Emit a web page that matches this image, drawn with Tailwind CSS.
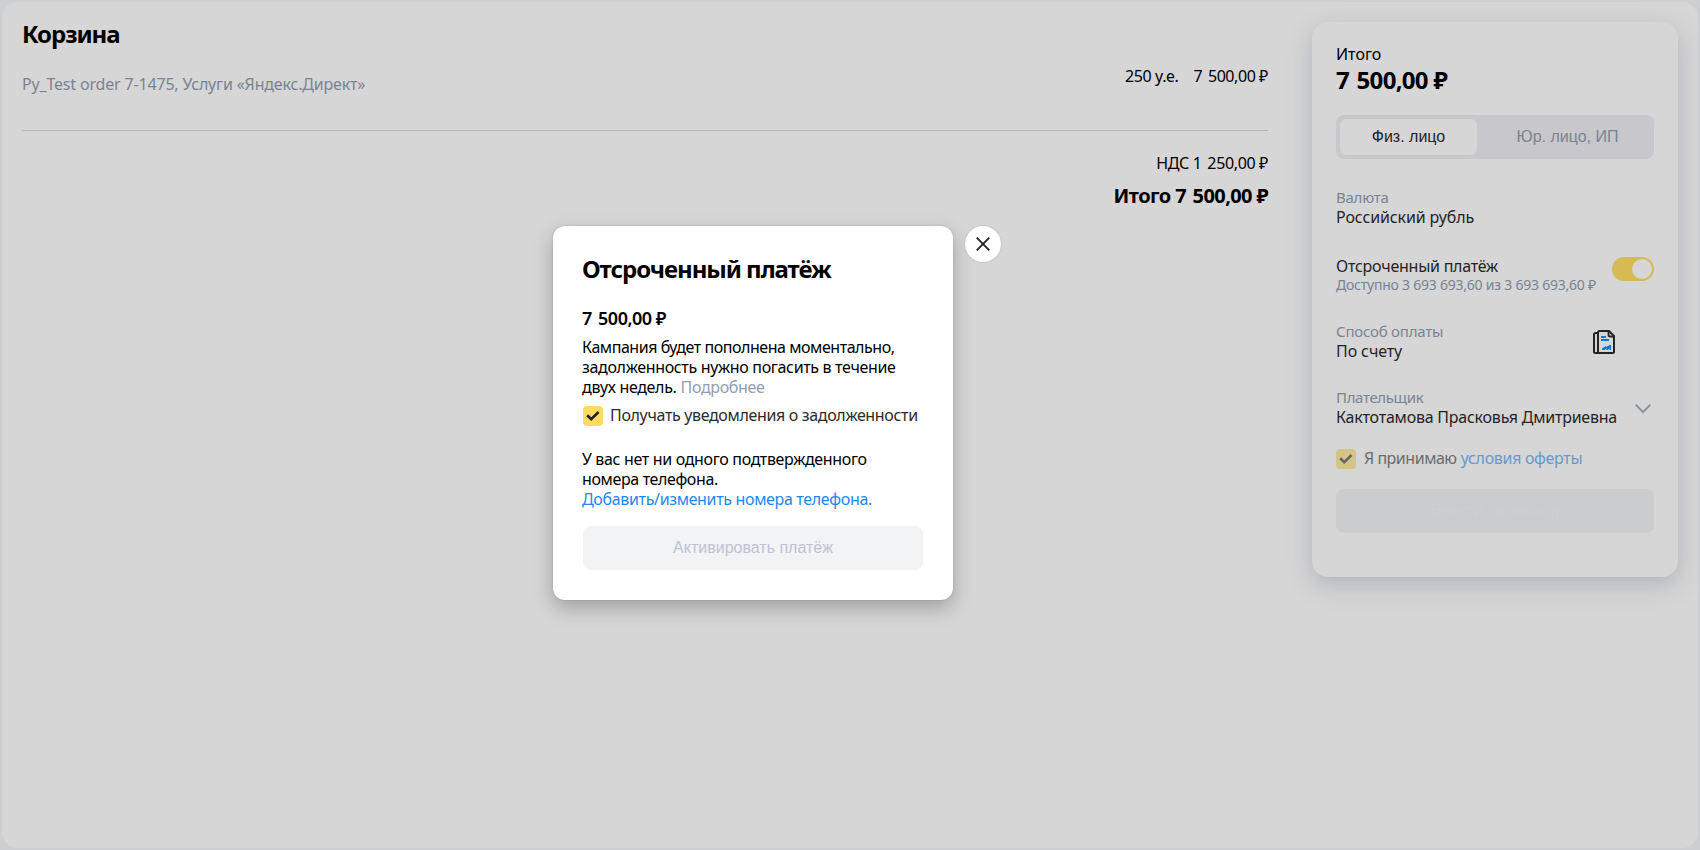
<!DOCTYPE html>
<html lang="ru">
<head>
<meta charset="utf-8">
<title>Корзина</title>
<script src="https://cdn.jsdelivr.net/npm/@tailwindcss/browser@4"></script>
</head>
<body class="relative h-[850px] w-[1700px] overflow-hidden bg-[#f5f7fa] p-0.5 font-['Noto_Sans','Open_Sans',sans-serif] text-base leading-5 text-black">
<main class="flex h-[846px] rounded-[16px] bg-white">
  <section class="ml-5 w-[1246px] whitespace-nowrap">
    <h1 class="mt-[18px] text-2xl leading-7 font-bold tracking-[-1.050px]">Корзина</h1>
    <div class="mt-[18px] flex h-[65px] justify-between border-b border-[#dadce8]">
      <span class="mt-2 tracking-[-0.175px] text-[#939cb0]">Py_Test order 7-1475, Услуги «Яндекс.Директ»</span>
      <div class="flex gap-[15px]"><span class="tracking-[-0.380px]">250 у.е.</span><span class="tracking-[-0.430px]"><span class="mr-0.5">7</span> 500,00 ₽</span></div>
    </div>
    <div class="mt-[22px] flex flex-col items-end">
      <span class="tracking-[-0.360px]">НДС <span class="mr-0.5">1</span> 250,00 ₽</span>
      <span class="mt-[11px] text-xl leading-6 font-bold tracking-[-0.590px]">Итого <span class="mr-0.5">7</span> 500,00 ₽</span>
    </div>
  </section>
  <aside class="mt-5 ml-[44px] h-[555px] w-[366px] rounded-[16px] bg-white px-6 pt-[22px] whitespace-nowrap text-[#2b2b2b] shadow-[0_8px_24px_rgba(110,120,150,0.3)]">
    <div class="text-black">Итого</div>
    <div class="mt-[2px] text-2xl leading-7 font-bold tracking-[-0.700px] text-black"><span class="mr-0.5">7</span> 500,00 ₽</div>
    <div class="mt-[21px] flex h-11 rounded-lg bg-[#edeef3] p-1 font-['Liberation_Sans',sans-serif]">
      <div class="flex w-[137px] items-center justify-center rounded-md bg-white">Физ. лицо</div>
      <div class="flex flex-1 items-center justify-center text-[#939cb0]"><span class="ml-2">Юр. лицо, ИП</span></div>
    </div>
    <div class="mt-7 text-[15px] tracking-[-0.250px] text-[#939cb0]">Валюта</div>
    <div class="tracking-[-0.120px]">Российский рубль</div>
    <div class="mt-[29px] flex justify-between">
      <div>
        <div class="tracking-[-0.240px]">Отсроченный платёж</div>
        <div class="text-sm leading-[18px] tracking-[-0.230px] text-[#939cb0]">Доступно 3 693 693,60 из 3 693 693,60 ₽</div>
      </div>
      <div class="mt-[1px] flex h-6 w-[42px] justify-end rounded-full bg-[#ffdf66] p-0.5"><div class="size-5 rounded-full bg-white"></div></div>
    </div>
    <div class="mt-[27px] flex justify-between">
      <div>
        <div class="text-[15px] tracking-[-0.220px] text-[#939cb0]">Способ оплаты</div>
        <div class="tracking-[-0.100px]">По счету</div>
      </div>
      <svg class="mt-[9px] mr-[39px] h-6 w-[22px]" viewBox="0 0 22 24" fill="none" stroke="#2b2b2b" stroke-width="2" stroke-linejoin="round"><path d="M5 3H2.500Q1 3 1 4.500V21.500Q1 23 2.500 23H19.500Q21 23 21 21.500V6L16 1H6.500Q5 1 5 2.500V23"/><path d="M15.500 1V5Q15.500 6.500 17 6.500H21" stroke-width="1.800"/><path d="M8 7H13M8 10H16" stroke="#1e87f0" stroke-width="2"/><path d="M9 20V18.500L13 16V17L17 15H18V20H16.500V18L15 20H13.500V18.500L11.500 20Z" fill="#1e87f0"  stroke="none"/></svg>
    </div>
    <div class="mt-[26px] flex justify-between">
      <div>
        <div class="text-[15px] tracking-[-0.350px] text-[#939cb0]">Плательщик</div>
        <div class="tracking-[-0.230px]">Кактотамова Прасковья Дмитриевна</div>
      </div>
      <svg class="mt-[17px] mr-[3px] h-[10px] w-4" viewBox="0 0 16 10" fill="none" stroke="#a9b0c2" stroke-width="2"><path d="M.700.800L8 8L15.300.800"/></svg>
    </div>
    <div class="mt-[22px] flex opacity-60">
      <div class="flex size-5 shrink-0 items-center justify-center rounded bg-[#ffdb62]"><svg class="h-[10px] w-[14px]" viewBox="0 0 14 10" fill="none" stroke="#222" stroke-width="2.600"><path d="M1.200 4.300L5.200 8.200L12.600 1"/></svg></div>
      <div class="mt-[-1px] ml-2 tracking-[-0.480px]">Я принимаю</div>
      <div class="mt-[-1px] ml-1 tracking-[-0.320px] text-[#1e87f0]">условия оферты</div>
    </div>
    <div class="mt-5 flex h-11 items-center justify-center rounded-lg bg-[#f2f3f5] font-['Liberation_Sans',sans-serif] text-[#f7f7f8]">Ввести промокод</div>
  </aside>
</main>
<div class="absolute inset-0 bg-black/16"></div>
<div class="absolute top-[226px] left-[553px] h-[374px] w-[400px] rounded-xl bg-white px-[30px] pt-[29px] whitespace-nowrap shadow-[0_8px_20px_rgba(0,0,0,0.25),0_0_2px_rgba(0,0,0,0.2)]">
  <h2 class="-ml-px text-2xl leading-7 font-bold tracking-[-1.050px]">Отсроченный платёж</h2>
  <div class="mt-6 -ml-px text-lg leading-[22px] font-semibold tracking-[-0.480px]"><span class="mr-0.5">7</span> 500,00 ₽</div>
  <p class="mt-2 -ml-px"><span class="tracking-[-0.450px]">Кампания будет пополнена моментально,</span><br><span class="tracking-[-0.330px]">задолженность нужно погасить в течение</span><br><span class="tracking-[-0.330px]">двух недель.</span><span class="ml-1 tracking-[-0.350px] text-[#939cb0]">Подробнее</span></p>
  <div class="mt-[9px] flex text-[#2b2b2b]">
    <div class="flex size-5 shrink-0 items-center justify-center rounded bg-[#ffdb62]"><svg class="h-[10px] w-[14px]" viewBox="0 0 14 10" fill="none" stroke="#222" stroke-width="2.600"><path d="M1.200 4.300L5.200 8.200L12.600 1"/></svg></div>
    <div class="mt-[-1px] ml-[7px] tracking-[-0.340px]">Получать уведомления о задолженности</div>
  </div>
  <p class="mt-[23px] -ml-px"><span class="tracking-[-0.330px]">У вас нет ни одного подтвержденного</span><br><span class="tracking-[-0.370px]">номера телефона.</span><br><span class="tracking-[-0.340px] text-[#1e87f0]">Добавить/изменить номера телефона.</span></p>
  <div class="mt-[17px] flex h-11 items-center justify-center rounded-lg bg-[#f2f3f5] font-['Liberation_Sans',sans-serif] text-[#bfc2d3]">Активировать платёж</div>
</div>
<div class="absolute top-[226px] left-[965px] flex size-9 items-center justify-center rounded-full bg-white shadow-[0_0_2px_rgba(0,0,0,0.2)]"><svg class="size-[14px]" viewBox="0 0 14 14" fill="none" stroke="#222" stroke-width="1.800"><path d="M.700.700L13.300 13.300M13.300.700L.700 13.300"/></svg></div>
</body>
</html>
